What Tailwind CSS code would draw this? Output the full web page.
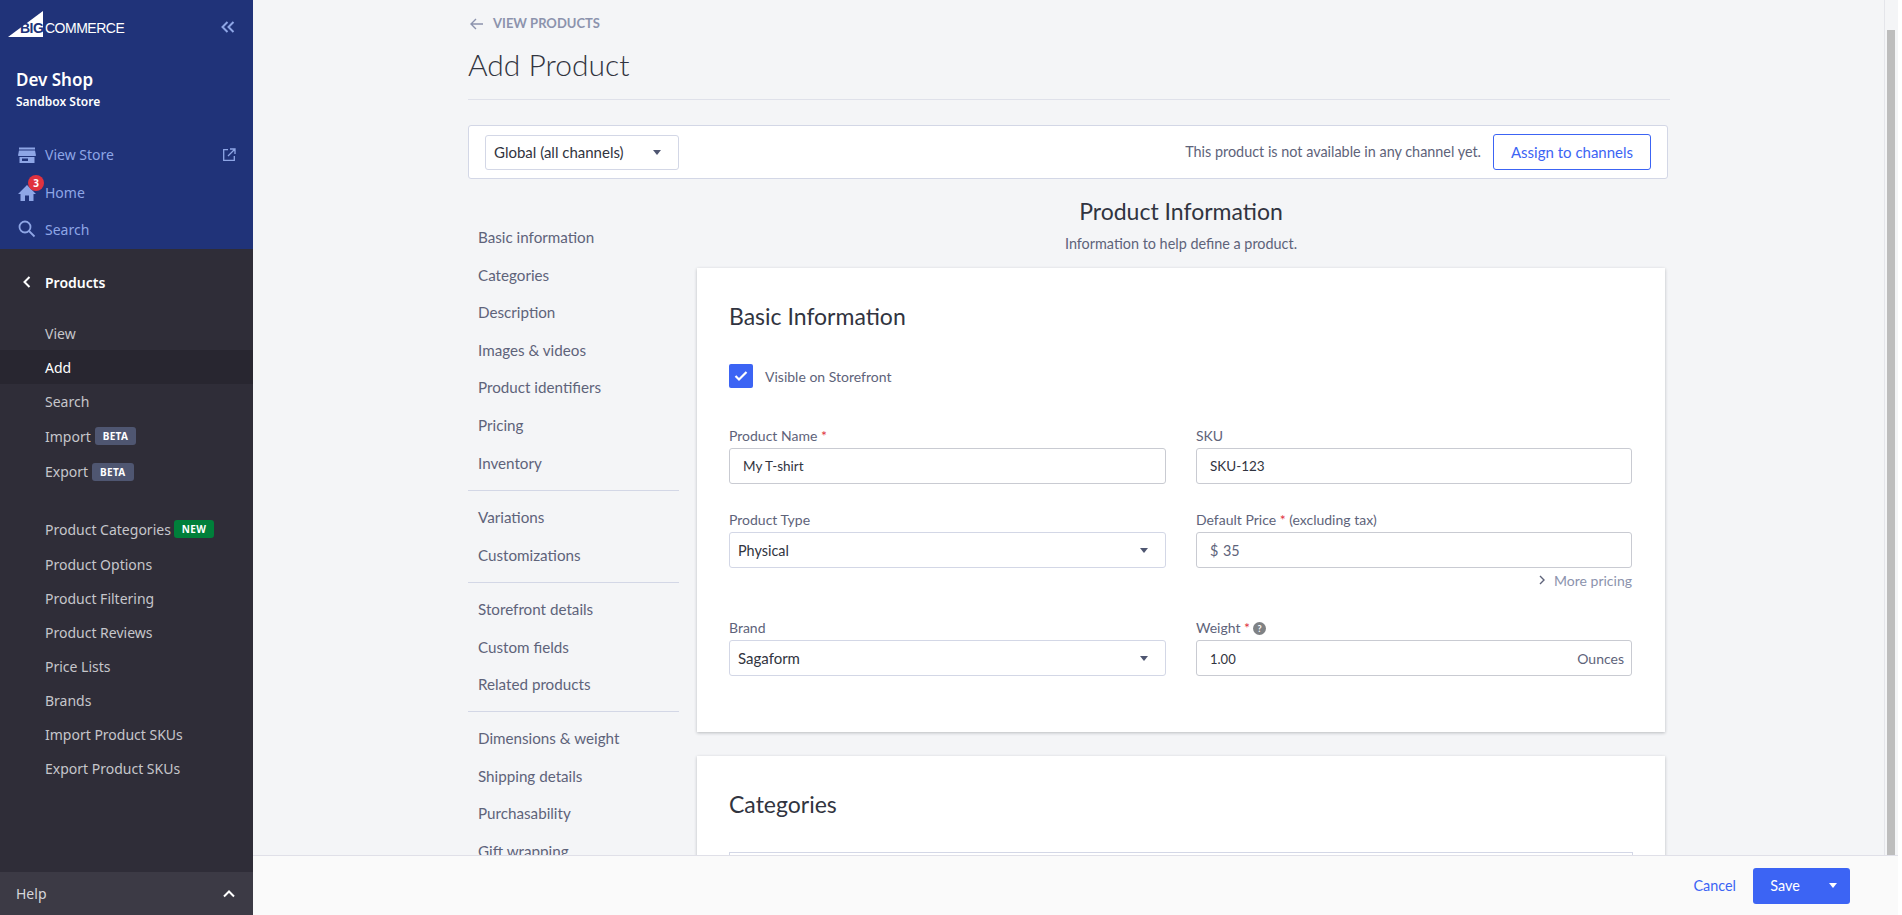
<!DOCTYPE html>
<html lang="en">
<head>
<meta charset="UTF-8">
<title>Add Product</title>
<script src="https://cdn.jsdelivr.net/npm/@tailwindcss/browser@4"></script>
</head>
<body class="h-[915px] overflow-hidden bg-[#f4f5f7] font-['Noto_Sans',sans-serif]">
<div class="relative flex h-[915px]">

  <!-- sidebar -->
  <aside class="flex w-[253px] shrink-0 flex-col bg-[#2f2d38] text-[14px]">
    <div class="h-[249px] bg-[#203379]">
      <div class="flex h-[53px] items-start justify-between pl-[8px] pr-[18px] pt-[11px]">
        <div class="relative h-[26px] w-[118px]">
          <svg class="absolute left-0 top-0" width="36" height="26" viewBox="0 0 36 26"><path d="M0 26 L35 0 L35 26 Z" fill="#fff"/></svg>
          <span class="absolute left-[12px] top-[9px] font-['Liberation_Sans',sans-serif] text-[14px] leading-[16px] font-bold tracking-[-0.5px] text-[#203379]">BIG</span>
          <span class="absolute left-[37px] top-[9px] font-['Liberation_Sans',sans-serif] text-[14px] leading-[16px] tracking-[-0.5px] text-white">COMMERCE</span>
        </div>
        <svg class="mt-[10px]" width="14" height="12" viewBox="0 0 14 12" fill="none" stroke="#8ea6e6" stroke-width="2"><path d="M6.500 1 L1.500 6 L6.500 11 M12.500 1 L7.500 6 L12.500 11"/></svg>
      </div>
      <div class="pl-[16px] pt-[15px] text-white">
        <div class="text-[17px] leading-[24px] font-semibold">Dev Shop</div>
        <div class="text-[12px] leading-[20px] font-semibold">Sandbox Store</div>
      </div>
      <div class="mt-[23px] text-[#8ea6e6]">
        <div class="flex h-[39px] items-center pl-[18px] pr-[17px]">
          <svg class="mr-[9px] w-[18px]" width="18" height="18" viewBox="0 0 18 18" fill="#8ea6e6"><path d="M1 1.500h16v2H1z"/><path d="M1 4.500h16l.8 4v1.500H.2V8.500z"/><path fill-rule="evenodd" d="M1.500 11h15v6h-15zM4 12.500v2.500h6v-2.500z"/></svg>
          <span class="flex-1">View Store</span>
          <svg width="14" height="14" viewBox="0 0 14 14" fill="none" stroke="#8ea6e6" stroke-width="1.300"><path d="M6 1.700H1.700v10.600h10.600V8M8 1H13v5M13 1L6 8"/></svg>
        </div>
        <div class="flex h-[37px] items-center pl-[18px]">
          <div class="relative mr-[9px] w-[18px]">
            <svg width="18" height="18" viewBox="0 0 18 18" fill="#8ea6e6"><path d="M9 1 L18 10 H15.500 V17 H11 V11.500 H7 V17 H2.500 V10 H0 Z"/></svg>
            <span class="absolute left-[10px] top-[-9px] flex h-[16px] w-[16px] items-center justify-center rounded-full bg-[#e0323f] text-[10px] leading-none font-bold text-white">3</span>
          </div>
          <span>Home</span>
        </div>
        <div class="flex h-[36px] items-center pl-[18px]">
          <svg class="mr-[9px] w-[18px]" width="18" height="18" viewBox="0 0 18 18" fill="none" stroke="#8ea6e6" stroke-width="1.800"><circle cx="7" cy="7" r="5.500"/><path d="M11 11 L16.500 16.500"/></svg>
          <span>Search</span>
        </div>
      </div>
    </div>
    <div class="flex h-[66px] items-center pl-[23px] font-semibold text-white">
      <svg class="mr-[14px]" width="8" height="12" viewBox="0 0 8 12" fill="none" stroke="#fff" stroke-width="2"><path d="M6.500 1 L1.500 6 L6.500 11"/></svg>
      <span>Products</span>
    </div>
    <div class="text-[#c6c6cb]">
      <div class="flex h-[35px] items-center pl-[45px] pt-[2px]">View</div>
      <div class="flex h-[34px] items-center bg-[#282630] pl-[45px] text-white">Add</div>
      <div class="flex h-[34px] items-center pl-[45px]">Search</div>
      <div class="flex h-[36px] items-center pl-[45px]">Import<span class="ml-[4px] rounded-[3px] bg-[#4f5671] px-[8px] text-[10px] leading-[18px] font-bold tracking-[0.3px] text-white">BETA</span></div>
      <div class="flex h-[35px] items-center pl-[45px]">Export<span class="ml-[4px] rounded-[3px] bg-[#4f5671] px-[8px] text-[10px] leading-[18px] font-bold tracking-[0.3px] text-white">BETA</span></div>
      <div class="mt-[22px] flex h-[36px] items-center pl-[45px]">Product Categories<span class="ml-[3px] rounded-[3px] bg-[#007f3a] px-[8px] text-[10px] leading-[18px] font-bold tracking-[0.3px] text-white">NEW</span></div>
      <div class="flex h-[34px] items-center pl-[45px]">Product Options</div>
      <div class="flex h-[34px] items-center pl-[45px]">Product Filtering</div>
      <div class="flex h-[34px] items-center pl-[45px]">Product Reviews</div>
      <div class="flex h-[34px] items-center pl-[45px]">Price Lists</div>
      <div class="flex h-[34px] items-center pl-[45px]">Brands</div>
      <div class="flex h-[34px] items-center pl-[45px]">Import Product SKUs</div>
      <div class="flex h-[34px] items-center pl-[45px]">Export Product SKUs</div>
    </div>
    <div class="mt-auto flex h-[43px] items-center justify-between bg-[#3c3a45] pl-[16px] pr-[18px] text-[#d6d6da]">
      <span>Help</span>
      <svg width="12" height="8" viewBox="0 0 12 8" fill="none" stroke="#fff" stroke-width="2"><path d="M1 6.500 L6 1.500 L11 6.500"/></svg>
    </div>
  </aside>

  <!-- page -->
  <main class="w-[1631px] overflow-hidden pl-[215px] font-['Lato',sans-serif] text-[14.4px]">
    <div class="w-[1202px]">
      <div class="flex h-[46px] items-center pt-[1px] text-[13px] font-bold text-[#8c93ad]">
        <svg class="ml-[2px] mr-[10px]" width="13" height="12" viewBox="0 0 13 12" fill="none" stroke="#8c93ad" stroke-width="1.400"><path d="M6 1 L1 6 L6 11 M1 6 H13"/></svg>
        <span>VIEW PRODUCTS</span>
      </div>
      <h1 class="h-[54px] border-b border-[#dfe1ea] text-[30px] leading-[36px] font-light text-[#313440]">Add Product</h1>
    </div>

    <div class="mt-[25px] flex h-[54px] w-[1200px] items-center justify-between rounded-[3px] border border-[#d3d7e6] bg-white pl-[16px] pr-[16px]">
      <div class="flex h-[35px] w-[194px] items-center justify-between rounded-[3px] border border-[#d3d7e6] pl-[8px] pr-[17px] text-[15px] text-[#313440]">
        <span>Global (all channels)</span>
        <svg width="8" height="5" viewBox="0 0 8 5" fill="#4f5671"><path d="M0 0h8L4 5z"/></svg>
      </div>
      <div class="flex items-center">
        <span class="mr-[12px] text-[#5e637a]">This product is not available in any channel yet.</span>
        <button class="h-[36px] w-[158px] rounded-[3px] border border-[#3c64f4] text-[15px] text-[#3c64f4]">Assign to channels</button>
      </div>
    </div>

    <div class="flex">
      <nav class="w-[211px] shrink-0 pt-[40px] text-[15.2px] text-[#5e637a]">
        <div class="w-[211px] pl-[10px]">
          <div class="flex h-[37px] items-center">Basic information</div>
          <div class="flex h-[38px] items-center">Categories</div>
          <div class="flex h-[37px] items-center">Description</div>
          <div class="flex h-[38px] items-center">Images &amp; videos</div>
          <div class="flex h-[37px] items-center">Product identifiers</div>
          <div class="flex h-[39px] items-center">Pricing</div>
          <div class="flex h-[37px] items-center">Inventory</div>
        </div>
        <div class="mt-[8px] border-t border-[#d3d7e6] pl-[10px] pt-[7px]">
          <div class="flex h-[38px] items-center">Variations</div>
          <div class="flex h-[38px] items-center">Customizations</div>
        </div>
        <div class="mt-[8px] border-t border-[#d3d7e6] pl-[10px] pt-[7px]">
          <div class="flex h-[38px] items-center">Storefront details</div>
          <div class="flex h-[38px] items-center">Custom fields</div>
          <div class="flex h-[37px] items-center">Related products</div>
        </div>
        <div class="mt-[8px] border-t border-[#d3d7e6] pl-[10px] pt-[7px]">
          <div class="flex h-[38px] items-center">Dimensions &amp; weight</div>
          <div class="flex h-[38px] items-center">Shipping details</div>
          <div class="flex h-[37px] items-center">Purchasability</div>
          <div class="flex h-[38px] items-center">Gift wrapping</div>
        </div>
      </nav>

      <div class="ml-[18px] w-[968px]">
        <div class="pt-[16px] text-center">
          <h2 class="text-[23px] leading-[32px] text-[#313440]">Product Information</h2>
          <p class="mt-[7px] text-[14.4px] leading-[20px] text-[#5e637a]">Information to help define a product.</p>
        </div>

        <section class="mt-[14px] h-[464px] bg-white px-[32px] pt-[30px] shadow-[0_1px_3px_rgba(49,52,64,0.3)]">
          <h3 class="text-[23px] leading-[36px] text-[#313440]">Basic Information</h3>
          <div class="mt-[30px] flex items-center">
            <span class="flex h-[24px] w-[24px] items-center justify-center rounded-[2px] bg-[#3c64f4]">
              <svg width="14" height="12" viewBox="0 0 14 12" fill="none" stroke="#fff" stroke-width="2.200"><path d="M1.500 6 L5 9.500 L12.500 2"/></svg>
            </span>
            <span class="ml-[12px] text-[14px] text-[#5e637a]">Visible on Storefront</span>
          </div>

          <div class="mt-[38px] grid grid-cols-[437px_436px] gap-x-[30px]">
            <div>
              <label class="block h-[22px] text-[14px] leading-[20px] text-[#5e637a]">Product Name <span class="text-[#e0323f]">*</span></label>
              <div class="flex h-[36px] items-center rounded-[3px] border border-[#c9cbd2] bg-white pl-[13px] pt-[1px] text-[13.5px] text-[#313440]">My T-shirt</div>
            </div>
            <div>
              <label class="block h-[22px] text-[14px] leading-[20px] text-[#5e637a]">SKU</label>
              <div class="flex h-[36px] items-center rounded-[3px] border border-[#c9cbd2] bg-white pl-[13px] pt-[1px] text-[13.5px] text-[#313440]">SKU-123</div>
            </div>

            <div class="mt-[26px]">
              <label class="block h-[22px] text-[14px] leading-[20px] text-[#5e637a]">Product Type</label>
              <div class="flex h-[36px] items-center justify-between rounded-[3px] border border-[#d3d7e6] bg-white pl-[8px] pr-[17px] text-[14.4px] text-[#313440]">
                <span class="pt-[2px]">Physical</span>
                <svg width="8" height="5" viewBox="0 0 8 5" fill="#4f5671"><path d="M0 0h8L4 5z"/></svg>
              </div>
            </div>
            <div class="mt-[26px]">
              <label class="block h-[22px] text-[14px] leading-[20px] text-[#5e637a]">Default Price <span class="text-[#e0323f]">*</span> (excluding tax)</label>
              <div class="flex h-[36px] items-center rounded-[3px] border border-[#c9cbd2] bg-white pl-[13px] pt-[1px] text-[#5e637a]"><span class="w-[13px]">$</span><span>35</span></div>
              <div class="flex h-[24px] items-center justify-end text-[14px] text-[#8c93ad]">
                <svg class="mr-[9px]" width="6" height="10" viewBox="0 0 6 10" fill="none" stroke="#5e637a" stroke-width="1.400"><path d="M1 1 L5 5 L1 9"/></svg>
                <span>More pricing</span>
              </div>
            </div>

            <div class="mt-[26px]">
              <label class="block h-[22px] text-[14px] leading-[20px] text-[#5e637a]">Brand</label>
              <div class="flex h-[36px] items-center justify-between rounded-[3px] border border-[#d3d7e6] bg-white pl-[8px] pr-[17px] text-[15px] text-[#313440]">
                <span>Sagaform</span>
                <svg width="8" height="5" viewBox="0 0 8 5" fill="#4f5671"><path d="M0 0h8L4 5z"/></svg>
              </div>
            </div>
            <div class="mt-[26px]">
              <label class="mb-[2px] flex h-[20px] items-center text-[14px] leading-[20px] text-[#5e637a]">
                <span>Weight <span class="text-[#e0323f]">*</span></span>
                <span class="ml-[3px] flex h-[13px] w-[13px] items-center justify-center rounded-full bg-[#7f8285] text-[9px] leading-none font-bold text-white">?</span>
              </label>
              <div class="flex h-[36px] items-center justify-between rounded-[3px] border border-[#c9cbd2] bg-white pl-[13px] pr-[7px] text-[13px] text-[#313440]">
                <span class="pt-[3px]">1.00</span>
                <span class="text-[14px] text-[#5e637a]">Ounces</span>
              </div>
            </div>
          </div>
        </section>

        <section class="mt-[24px] h-[200px] bg-white px-[32px] pt-[30px] shadow-[0_1px_3px_rgba(49,52,64,0.3)]">
          <h3 class="text-[23px] leading-[36px] text-[#313440]">Categories</h3>
          <div class="mt-[30px] h-[60px] border border-[#d3d7e6]"></div>
        </section>
      </div>
    </div>
  </main>

  <!-- scrollbar -->
  <div class="absolute right-0 top-0 h-[915px] w-[18px] border-l border-r-[4px] border-l-[#e4e5ea] border-r-white bg-[#f4f5f7] pl-[2px]">
    <div class="mt-[30px] h-[825px] w-[8px] bg-[#bdbdbd]"></div>
  </div>

  <!-- save bar -->
  <footer class="absolute bottom-0 left-[253px] flex h-[60px] w-[1645px] items-center justify-end border-t border-[#e0e0e8] bg-[#fafafa] pr-[48px] font-['Lato',sans-serif] text-[14.4px]">
    <span class="mr-[17px] text-[#3c64f4]">Cancel</span>
    <div class="flex h-[36px] w-[97px] items-center rounded-[3px] bg-[#3c64f4] text-white">
      <span class="w-[64px] text-center">Save</span>
      <svg class="ml-[12px]" width="8" height="5" viewBox="0 0 8 5" fill="#fff"><path d="M0 0h8L4 5z"/></svg>
    </div>
  </footer>
</div>
</body>
</html>
